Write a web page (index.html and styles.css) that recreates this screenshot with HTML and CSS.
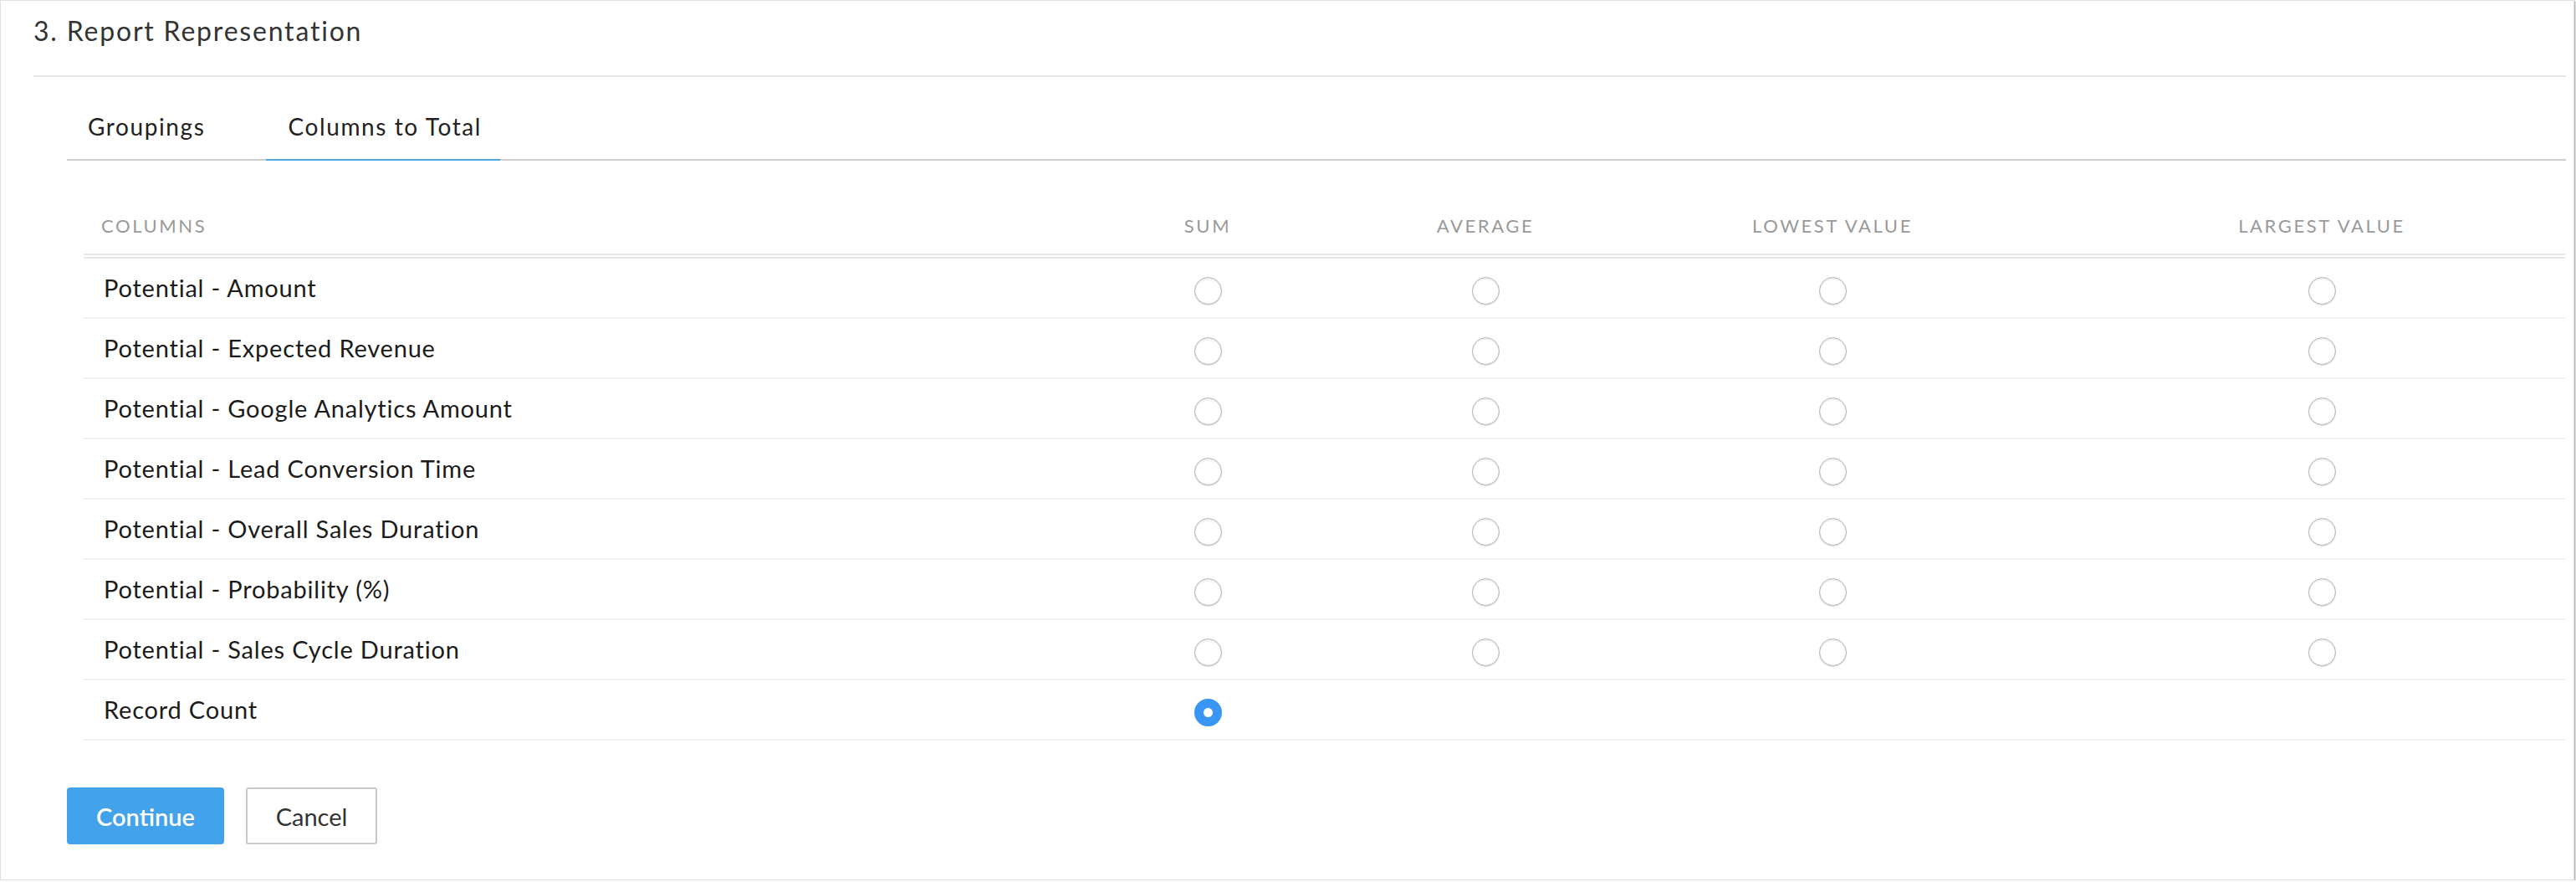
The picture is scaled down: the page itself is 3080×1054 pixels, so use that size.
FILE: index.html
```html
<!DOCTYPE html>
<html lang="en">
<head>
    <meta charset="UTF-8">
    <title>Report Representation</title>
    <link rel="stylesheet" href="styles.css">
</head>
<body>
    <div class="card">
        <h2 class="section-title">3. Report Representation</h2>

        <div class="tabs">
            <div class="tab">Groupings</div>
            <div class="tab active">Columns to Total</div>
        </div>

        <table class="totals">
            <colgroup>
                <col class="col-name">
                <col class="col-sum">
                <col class="col-avg">
                <col class="col-low">
                <col class="col-high">
            </colgroup>
            <thead>
                <tr>
                    <th class="name">Columns</th>
                    <th>Sum</th>
                    <th>Average</th>
                    <th>Lowest Value</th>
                    <th>Largest Value</th>
                </tr>
            </thead>
            <tbody>
                <tr>
                    <td class="name">Potential - Amount</td>
                    <td><input type="radio" class="radio" name="r1"></td>
                    <td><input type="radio" class="radio" name="r1"></td>
                    <td><input type="radio" class="radio" name="r1"></td>
                    <td><input type="radio" class="radio" name="r1"></td>
                </tr>
                <tr>
                    <td class="name">Potential - Expected Revenue</td>
                    <td><input type="radio" class="radio" name="r2"></td>
                    <td><input type="radio" class="radio" name="r2"></td>
                    <td><input type="radio" class="radio" name="r2"></td>
                    <td><input type="radio" class="radio" name="r2"></td>
                </tr>
                <tr>
                    <td class="name">Potential - Google Analytics Amount</td>
                    <td><input type="radio" class="radio" name="r3"></td>
                    <td><input type="radio" class="radio" name="r3"></td>
                    <td><input type="radio" class="radio" name="r3"></td>
                    <td><input type="radio" class="radio" name="r3"></td>
                </tr>
                <tr>
                    <td class="name">Potential - Lead Conversion Time</td>
                    <td><input type="radio" class="radio" name="r4"></td>
                    <td><input type="radio" class="radio" name="r4"></td>
                    <td><input type="radio" class="radio" name="r4"></td>
                    <td><input type="radio" class="radio" name="r4"></td>
                </tr>
                <tr>
                    <td class="name">Potential - Overall Sales Duration</td>
                    <td><input type="radio" class="radio" name="r5"></td>
                    <td><input type="radio" class="radio" name="r5"></td>
                    <td><input type="radio" class="radio" name="r5"></td>
                    <td><input type="radio" class="radio" name="r5"></td>
                </tr>
                <tr>
                    <td class="name">Potential - Probability (%)</td>
                    <td><input type="radio" class="radio" name="r6"></td>
                    <td><input type="radio" class="radio" name="r6"></td>
                    <td><input type="radio" class="radio" name="r6"></td>
                    <td><input type="radio" class="radio" name="r6"></td>
                </tr>
                <tr>
                    <td class="name">Potential - Sales Cycle Duration</td>
                    <td><input type="radio" class="radio" name="r7"></td>
                    <td><input type="radio" class="radio" name="r7"></td>
                    <td><input type="radio" class="radio" name="r7"></td>
                    <td><input type="radio" class="radio" name="r7"></td>
                </tr>
                <tr>
                    <td class="name">Record Count</td>
                    <td><input type="radio" class="radio" name="r8" checked></td>
                    <td></td>
                    <td></td>
                    <td></td>
                </tr>
            </tbody>
        </table>

        <div class="actions">
            <button class="btn btn-primary">Continue</button>
            <button class="btn btn-default">Cancel</button>
        </div>
    </div>
</body>
</html>
```

FILE: styles.css
```css
body { margin: 0; font-family: Lato, "Open Sans", sans-serif; background: #fff; color: #222; }

.card { margin: 0 2px 0 0; border: 1px solid #e0e0e0; background: #fff; box-shadow: 1px 1px 2px rgba(0, 0, 0, 0.4); padding-bottom: 42px; }

.section-title { margin: 0 9px 0 39px; padding-top: 17px; height: 72px; font-size: 32px; line-height: 38px; font-weight: normal; letter-spacing: 1.8px; color: #333; border-bottom: 2px solid #e6e6e6; }

.tabs { display: flex; gap: 48px; margin: 42px 9px 0 79px; border-bottom: 2px solid #cdcdcd; }
.tab { padding: 0 25px 22px; margin-bottom: -2px; font-size: 28px; line-height: 34px; letter-spacing: 1.6px; color: #222; border-bottom: 2px solid transparent; cursor: pointer; }
.tab.active { padding: 0 22px 22px 26px; border-bottom-color: #4fa8e0; }

.totals { margin: 49px 10px 0 99px; width: 2967px; border-collapse: collapse; table-layout: fixed; }
.col-name { width: 1133px; }
.col-sum { width: 422px; }
.col-avg { width: 242px; }
.col-low { width: 588px; }
.col-high { width: 582px; }

.totals th { padding: 16px 0 20px; font-size: 22px; line-height: 26px; font-weight: normal; letter-spacing: 2.6px; color: #999; text-transform: uppercase; text-align: center; border-bottom: 6px double #e6e6e6; }
.totals th.name { text-align: left; padding-left: 21px; }
.totals td { height: 70px; padding: 0; text-align: center; vertical-align: middle; border-bottom: 2px solid #f1f1f1; }
.totals td.name { text-align: left; padding-left: 24px; font-size: 29px; line-height: 34px; letter-spacing: 0.8px; color: #1b1b1b; }

.radio { appearance: none; -webkit-appearance: none; display: block; box-sizing: border-box; width: 33px; height: 33px; margin: 6px auto 0; border-radius: 50%; border: 1px solid #b3b3b3; background: #fff; box-shadow: inset 0 2px 2px rgba(0, 0, 0, 0.07), 0 1px 1px rgba(0, 0, 0, 0.12); }
.radio:checked { border: 11px solid #3a96f5; box-shadow: none; }

.actions { display: flex; gap: 26px; margin: 56px 0 0 79px; }
.btn { height: 68px; font-family: inherit; font-size: 29px; border-radius: 4px; cursor: pointer; padding: 0; }
.btn-primary { width: 188px; background: #42a2ea; border: none; color: #fff; font-weight: 600; }
.btn-default { width: 157px; background: #fff; border: 2px solid #c8c8c8; color: #333; border-radius: 3px; }
```
